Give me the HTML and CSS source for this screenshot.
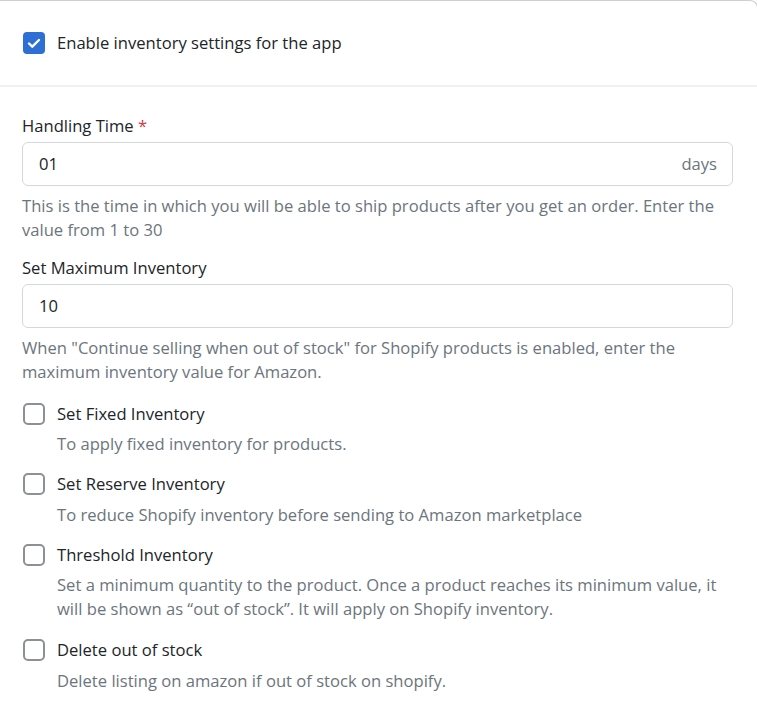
FILE: index.html
```html
<!DOCTYPE html>
<html>
<head>
<meta charset="utf-8">
<link rel="stylesheet" href="styles.css">
</head>
<body>
<div class="card">
  <div class="card-head">
    <label class="check-row">
      <span class="box checked"><svg viewBox="0 0 22 22" width="22" height="22"><path d="M6 11.5l3.3 3.2L16 8" fill="none" stroke="#fff" stroke-width="2.4" stroke-linecap="round" stroke-linejoin="round"/></svg></span>
      <span class="check-label">Enable inventory settings for the app</span>
    </label>
  </div>
  <div class="card-body">
    <div class="field-label">Handling Time <span class="req">*</span></div>
    <div class="input"><span class="val">01</span><span class="suffix">days</span></div>
    <p class="help">This is the time in which you will be able to ship products after you get an order. Enter the value from 1 to 30</p>

    <div class="field-label second">Set Maximum Inventory</div>
    <div class="input"><span class="val">10</span></div>
    <p class="help">When "Continue selling when out of stock" for Shopify products is enabled, enter the maximum inventory value for Amazon.</p>

    <div class="option first">
      <div class="check-row"><span class="box"></span><span class="check-label">Set Fixed Inventory</span></div>
      <p class="desc">To apply fixed inventory for products.</p>
    </div>
    <div class="option">
      <div class="check-row"><span class="box"></span><span class="check-label">Set Reserve Inventory</span></div>
      <p class="desc loose">To reduce Shopify inventory before sending to Amazon marketplace</p>
    </div>
    <div class="option spaced">
      <div class="check-row"><span class="box"></span><span class="check-label">Threshold Inventory</span></div>
      <p class="desc">Set a minimum quantity to the product. Once a product reaches its minimum value, it will be shown as “out of stock”. It will apply on Shopify inventory.</p>
    </div>
    <div class="option last">
      <div class="check-row"><span class="box"></span><span class="check-label">Delete out of stock</span></div>
      <p class="desc loose">Delete listing on amazon if out of stock on shopify.</p>
    </div>
  </div>
</div>
</body>
</html>
```

FILE: styles.css
```css
html, body {
  margin: 0;
  padding: 0;
  background: #fff;
  overflow: hidden;
}
body {
  font-family: "Open Sans", "Noto Sans", sans-serif;
  font-size: 16.6px;
  line-height: 24px;
  color: #212529;
}
.card {
  border-top: 1px solid #cfcfcf;
  border-right: 1px solid #cfcfcf;
  border-top-right-radius: 8px;
  margin-right: -1px;
}
.card-head {
  padding: 30px 22px 30px 23px;
  border-bottom: 2px solid #f0f0f0;
}
.check-row {
  display: flex;
  align-items: center;
  gap: 12px;
}
.box {
  width: 22px;
  height: 22px;
  box-sizing: border-box;
  border: 2px solid #8d9196;
  border-radius: 5px;
  flex: none;
  display: block;
}
.box.checked {
  background: #2d6fd4;
  border-color: #2d6fd4;
  border-radius: 4px;
}
.box.checked svg {
  display: block;
  margin: -2px;
}
.check-label {
  color: #212529;
}
.card-body {
  padding: 27px 24px 30px 22px;
}
.field-label {
  margin-bottom: 4px;
}
.field-label.second {
  margin-top: 14px;
}
.req {
  color: #dc3545;
}
.input {
  height: 44px;
  box-sizing: border-box;
  border: 1px solid #d5d8db;
  border-radius: 6px;
  display: flex;
  align-items: center;
  justify-content: space-between;
  padding: 0 15px 0 16px;
}
.suffix {
  color: #6c757d;
}
.help {
  margin: 8px 0 0;
  color: #6c757d;
}
.option {
  margin-top: 16px;
  padding-left: 1px;
}
.option.first {
  margin-top: 18px;
}
.option.spaced {
  margin-top: 16px;
}
.option.last {
  margin-top: 17px;
}
.desc {
  margin: 6px 0 0 34px;
  color: #6c757d;
}
.desc.loose {
  margin-top: 7px;
}
```
